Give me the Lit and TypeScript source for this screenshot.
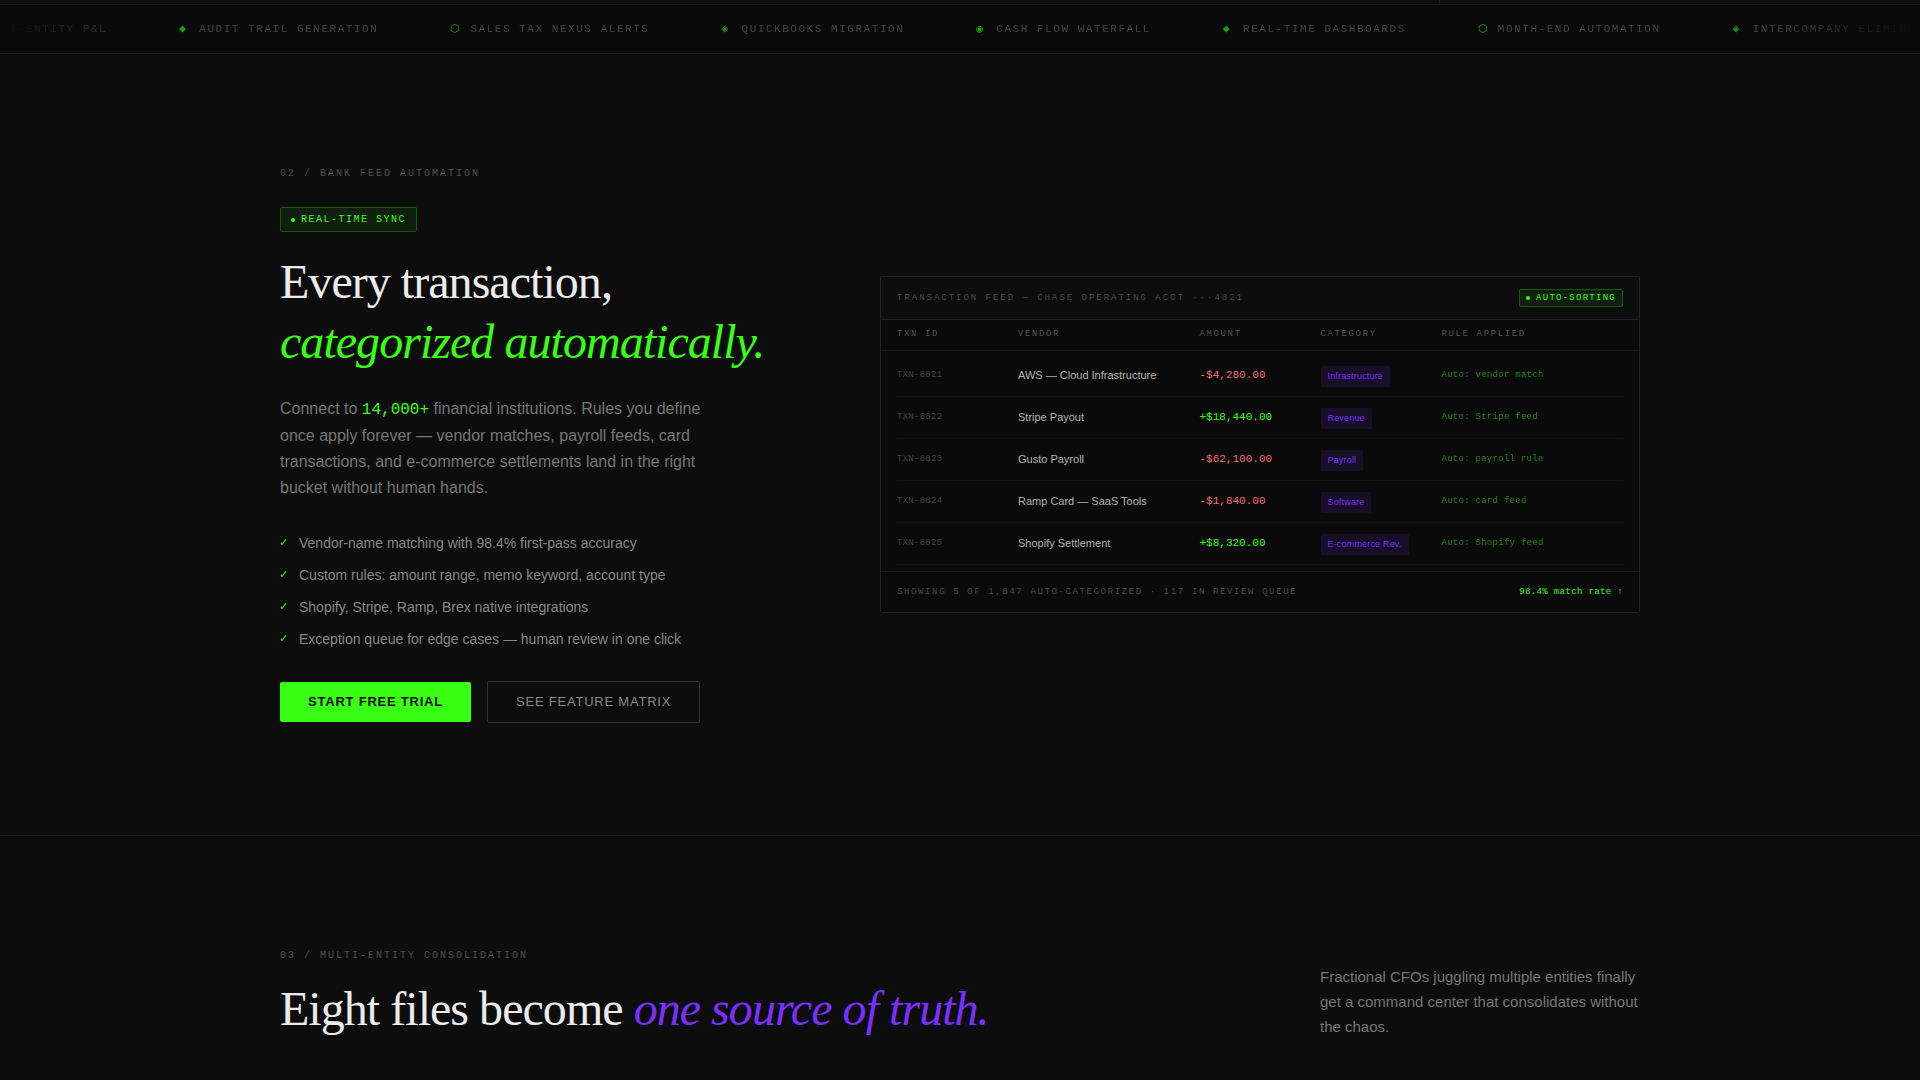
import { LitElement, html, css } from "lit";
import { customElement, property } from "lit/decorators.js";

interface Transaction {
  id: string;
  vendor: string;
  amount: string;
  category: string;
  rule: string;
}

const TICKER: [string, string][] = [
  ["◉", "Multi-entity P&L"],
  ["◆", "Audit trail generation"],
  ["⬡", "Sales tax nexus alerts"],
  ["◈", "QuickBooks migration"],
  ["◉", "Cash flow waterfall"],
  ["◆", "Real-time dashboards"],
  ["⬡", "Month-end automation"],
  ["◈", "Intercompany elimination"],
];

const TRANSACTIONS: Transaction[] = [
  { id: "TXN-8821", vendor: "AWS — Cloud Infrastructure", amount: "-$4,280.00", category: "Infrastructure", rule: "Auto: vendor match" },
  { id: "TXN-8822", vendor: "Stripe Payout", amount: "+$18,440.00", category: "Revenue", rule: "Auto: Stripe feed" },
  { id: "TXN-8823", vendor: "Gusto Payroll", amount: "-$62,100.00", category: "Payroll", rule: "Auto: payroll rule" },
  { id: "TXN-8824", vendor: "Ramp Card — SaaS Tools", amount: "-$1,840.00", category: "Software", rule: "Auto: card feed" },
  { id: "TXN-8825", vendor: "Shopify Settlement", amount: "+$8,320.00", category: "E-commerce Rev.", rule: "Auto: Shopify feed" },
];

const FEATURES = [
  "Vendor-name matching with 98.4% first-pass accuracy",
  "Custom rules: amount range, memo keyword, account type",
  "Shopify, Stripe, Ramp, Brex native integrations",
  "Exception queue for edge cases — human review in one click",
];

@customElement("feature-ticker")
export class FeatureTicker extends LitElement {
  static styles = css`
    :host {
      display: block;
      overflow: hidden;
      background: #0a0a0a;
      border-top: 1px solid #1a1a1a;
      border-bottom: 1px solid #1a1a1a;
    }
    .fade {
      overflow: hidden;
      mask-image: linear-gradient(90deg, transparent, #000 8%, #000 92%, transparent);
    }
    .track {
      display: flex;
      gap: 72px;
      width: max-content;
      margin: 0 0 0 -43px;
      padding: 16px 0;
      list-style: none;
    }
    .item {
      display: flex;
      align-items: center;
      gap: 10px;
      font: 11px/16px "Liberation Mono", monospace;
      letter-spacing: 0.14em;
      text-transform: uppercase;
      white-space: nowrap;
      color: #444;
    }
    .glyph {
      width: 10px;
      color: #39ff14;
      opacity: 0.6;
    }
  `;

  render() {
    return html`
      <div class="fade">
        <ul class="track">
          ${TICKER.map(
            ([glyph, label]) => html`<li class="item"><span class="glyph" aria-hidden="true">${glyph}</span>${label}</li>`
          )}
        </ul>
      </div>
    `;
  }
}

@customElement("status-badge")
export class StatusBadge extends LitElement {
  @property({ type: Boolean, reflect: true }) compact = false;

  static styles = css`
    :host {
      display: inline-flex;
      align-items: center;
      gap: 6px;
      padding: 5px 10px 4px;
      border: 1px solid rgba(57, 255, 20, 0.25);
      border-radius: 2px;
      background: rgba(57, 255, 20, 0.08);
      font: 10px/14px "Liberation Mono", monospace;
      letter-spacing: 0.15em;
      text-transform: uppercase;
      white-space: nowrap;
      color: #39ff14;
    }
    :host([compact]) {
      padding: 1px 6px;
      font-size: 9px;
      letter-spacing: 0.14em;
    }
    .dot {
      width: 4px;
      height: 4px;
      border-radius: 50%;
      background: currentColor;
    }
  `;

  render() {
    return html`<span class="dot"></span><slot></slot>`;
  }
}

@customElement("transaction-feed")
export class TransactionFeed extends LitElement {
  static styles = css`
    :host {
      display: block;
      border: 1px solid #222;
      border-radius: 2px;
      background: #0a0a0a;
      line-height: 1.6;
      font-family: "Liberation Sans", Arial, sans-serif;
    }
    .head,
    .foot {
      display: flex;
      align-items: center;
      justify-content: space-between;
      padding: 12px 16px;
      font: 9px/16px "Liberation Mono", monospace;
      text-transform: uppercase;
    }
    .head {
      background: #0d0d0d;
      border-bottom: 1px solid #222;
      letter-spacing: 0.22em;
      color: #4a4a4a;
    }
    .foot {
      border-top: 1px solid #1a1a1a;
      letter-spacing: 0.18em;
      color: #4a4a4a;
    }
    .rate {
      letter-spacing: 0.04em;
      text-transform: none;
      color: #39ff14;
    }
    .table,
    .columns,
    .rows {
      display: block;
    }
    .line {
      display: grid;
      grid-template-columns: 1fr 1.5fr 1fr 1fr 1.5fr;
    }
    .columns {
      padding: 8px 16px 10px;
      border-bottom: 1px solid #1a1a1a;
    }
    .columns th {
      padding: 0;
      text-align: left;
      font: 9px/12px "Liberation Mono", monospace;
      letter-spacing: 0.18em;
      text-transform: uppercase;
      color: #555;
    }
    .rows {
      padding: 4px 16px 6px;
    }
    .rows .line {
      padding: 11px 0 9px;
      border-bottom: 1px solid #111;
    }
    .rows td {
      padding: 0;
    }
    .rows .id,
    .rows .rule {
      padding-top: 1px;
      font-family: "Liberation Mono", monospace;
      font-size: 9px;
      line-height: 16px;
      letter-spacing: 0.03em;
    }
    .id {
      color: #444;
    }
    .rule {
      color: #39ff14;
      opacity: 0.5;
    }
    .vendor {
      font-size: 11px;
      line-height: 18px;
      color: #b4b4b4;
    }
    .amount {
      font-family: "Liberation Mono", monospace;
      font-size: 11px;
      line-height: 18px;
      color: #39ff14;
    }
    .amount.debit {
      color: #f07070;
    }
    .tag {
      display: block;
      width: max-content;
      padding: 3px 7px;
      border-radius: 1px;
      background: rgba(123, 47, 255, 0.12);
      font-size: 9px;
      line-height: 15px;
      letter-spacing: 0.02em;
      color: #7b2fff;
    }
  `;

  render() {
    return html`
      <header class="head">
        <span>Transaction feed — Chase operating acct ···4821</span>
        <status-badge compact>Auto-sorting</status-badge>
      </header>
      <table class="table">
        <thead class="columns">
          <tr class="line">
            <th>Txn ID</th>
            <th>Vendor</th>
            <th>Amount</th>
            <th>Category</th>
            <th>Rule applied</th>
          </tr>
        </thead>
        <tbody class="rows">
          ${TRANSACTIONS.map(
            (t) => html`
              <tr class="line">
                <td class="id">${t.id}</td>
                <td class="vendor">${t.vendor}</td>
                <td class="amount ${t.amount.startsWith("-") ? "debit" : ""}">${t.amount}</td>
                <td><span class="tag">${t.category}</span></td>
                <td class="rule">${t.rule}</td>
              </tr>
            `
          )}
        </tbody>
      </table>
      <footer class="foot">
        <span>Showing 5 of 1,847 auto-categorized · 117 in review queue</span>
        <span class="rate">98.4% match rate ↑</span>
      </footer>
    `;
  }
}

@customElement("app-root")
export class AppRoot extends LitElement {
  static styles = css`
    :host {
      display: block;
      min-height: 100vh;
      background: #0d0d0d;
      color: #e8e8e8;
      font-family: "Liberation Sans", Arial, sans-serif;
    }
    .previous {
      display: grid;
      grid-template-columns: 3fr 1fr;
      height: 4px;
    }
    .previous .pane {
      border-right: 1px solid #1a1a1a;
    }
    .section {
      padding: 112px 40px;
      border-bottom: 1px solid #1a1a1a;
    }
    .section.last {
      padding-bottom: 40px;
      border-bottom: 0;
    }
    .inner {
      max-width: 1360px;
      margin: 0 auto;
    }
    .split {
      display: grid;
      grid-template-columns: 13fr 19fr;
      gap: 80px;
      align-items: center;
    }
    .label {
      margin: 0;
      font: 10px/16px "Liberation Mono", monospace;
      letter-spacing: 0.2em;
      text-transform: uppercase;
      color: #505050;
    }
    .badge {
      margin: 25px 0 20px;
    }
    .title {
      margin: 0;
      font: 400 48px/60px "Liberation Serif", "Times New Roman", serif;
      letter-spacing: -0.02em;
      color: #ebebeb;
    }
    .green,
    .violet {
      font-style: italic;
    }
    .green {
      display: block;
      color: #39ff14;
    }
    .violet {
      color: #7b2fff;
    }
    .lead {
      max-width: 440px;
      margin: 24px 0 31px;
      font-size: 16px;
      line-height: 26px;
      color: #777;
    }
    .figure {
      font-family: "Liberation Mono", monospace;
      color: #39ff14;
    }
    .features {
      display: grid;
      gap: 10px;
      margin: 0 0 31px;
      padding: 0;
      list-style: none;
    }
    .feature {
      display: flex;
      gap: 10px;
      font-size: 14px;
      line-height: 22px;
      color: #888;
    }
    .check {
      width: 9px;
      font-family: "Liberation Mono", monospace;
      font-size: 12px;
      color: #39ff14;
    }
    .actions {
      display: flex;
      align-items: center;
      gap: 16px;
    }
    .button {
      padding: 12px 28px;
      border: 0;
      border-radius: 2px;
      background: #39ff14;
      font: 700 13px/16px "Liberation Sans", Arial, sans-serif;
      letter-spacing: 0.06em;
      text-transform: uppercase;
      color: #0a0a0a;
      cursor: pointer;
    }
    .button.ghost {
      border: 1px solid #333;
      background: transparent;
      font-weight: 400;
      color: #888;
    }
    .intro {
      display: flex;
      align-items: flex-end;
      justify-content: space-between;
      gap: 80px;
    }
    .intro .label {
      margin-bottom: 15px;
    }
    .aside {
      width: 320px;
      margin: 0;
      font-size: 15px;
      line-height: 25px;
      color: #777;
    }
  `;

  render() {
    return html`
      <div class="previous"><div class="pane"></div></div>
      <feature-ticker></feature-ticker>

      <section class="section">
        <div class="inner split">
          <div>
            <p class="label">02 / Bank feed automation</p>
            <status-badge class="badge">Real-time sync</status-badge>
            <h2 class="title">Every transaction, <em class="green">categorized automatically.</em></h2>
            <p class="lead">
              Connect to <span class="figure">14,000+</span> financial institutions. Rules you define once apply forever —
              vendor matches, payroll feeds, card transactions, and e-commerce settlements land in the right bucket without
              human hands.
            </p>
            <ul class="features">
              ${FEATURES.map((f) => html`<li class="feature"><span class="check" aria-hidden="true">✓</span>${f}</li>`)}
            </ul>
            <div class="actions">
              <button class="button" type="button">Start free trial</button>
              <button class="button ghost" type="button">See feature matrix</button>
            </div>
          </div>
          <transaction-feed></transaction-feed>
        </div>
      </section>

      <section class="section last">
        <div class="inner intro">
          <div>
            <p class="label">03 / Multi-entity consolidation</p>
            <h2 class="title">Eight files become <em class="violet">one source of truth.</em></h2>
          </div>
          <p class="aside">
            Fractional CFOs juggling multiple entities finally get a command center that consolidates without the chaos.
          </p>
        </div>
      </section>
    `;
  }
}
